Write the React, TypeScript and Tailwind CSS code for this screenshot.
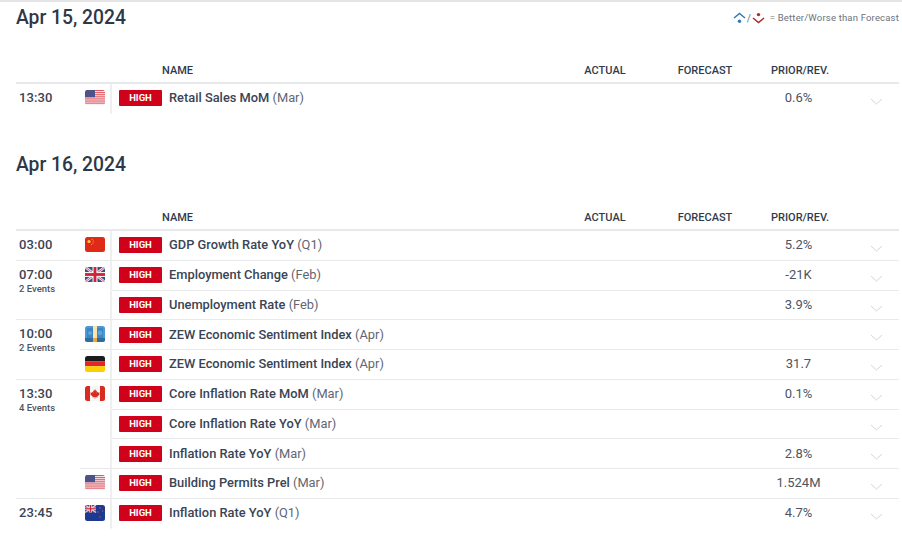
import React from "react";

type FlagName = "us" | "cn" | "gb" | "eu" | "de" | "ca" | "nz";

function Flag({ name }: { name: FlagName }) {
  const inner: Record<FlagName, React.ReactNode> = {
    us: (
      <>
        <rect width="20" height="15" fill="#f6eef0" />
        {[0, 2.1, 4.2, 6.3, 8.4, 10.5, 12.6].map((y) => (
          <rect key={y} y={y} width="20" height="1.05" fill="#e0525c" />
        ))}
        <rect width="10" height="7.2" fill="#4d5288" />
      </>
    ),
    cn: (
      <>
        <rect width="20" height="15" fill="#df2a17" />
        <circle cx="4" cy="4.5" r="1.6" fill="#f7d23a" />
        <circle cx="7.2" cy="2.2" r="0.5" fill="#f7d23a" />
        <circle cx="8.2" cy="4" r="0.5" fill="#f7d23a" />
        <circle cx="8" cy="6" r="0.5" fill="#f7d23a" />
        <circle cx="6.6" cy="7.4" r="0.5" fill="#f7d23a" />
      </>
    ),
    gb: (
      <>
        <rect width="20" height="15" fill="#3d4f8c" />
        <path d="M0 0L20 15M20 0L0 15" stroke="#f2f2f4" strokeWidth="2.6" />
        <path d="M0 0L20 15M20 0L0 15" stroke="#cf3044" strokeWidth="0.8" />
        <rect x="7.5" width="5" height="15" fill="#f2f2f4" />
        <rect y="5" width="20" height="5" fill="#f2f2f4" />
        <rect x="8.6" width="2.8" height="15" fill="#cf2337" />
        <rect y="6.1" width="20" height="2.8" fill="#cf2337" />
      </>
    ),
    eu: (
      <>
        <rect width="20" height="16" fill="#4b9ad8" />
        <rect x="2" y="2" width="6" height="10" fill="#3f86c0" />
        <rect x="12" y="2" width="6" height="10" fill="#3f86c0" />
        <circle cx="5" cy="7" r="2" fill="#5aa5de" />
        <circle cx="15" cy="7" r="2.4" fill="#5aa5de" />
        <rect y="12" width="20" height="4" fill="#2f6d9c" />
        <rect x="8" width="4" height="12" fill="#fbe3b0" />
        <rect x="8" y="12" width="4" height="4" fill="#f4a334" />
      </>
    ),
    de: (
      <>
        <rect width="20" height="5.2" fill="#1c1c1c" />
        <rect y="5.2" width="20" height="5" fill="#e3262e" />
        <rect y="10.2" width="20" height="5.8" fill="#fccf00" />
      </>
    ),
    ca: (
      <>
        <rect width="20" height="15" fill="#f6f6f6" />
        <rect width="5" height="15" fill="#d92b20" />
        <rect x="15" width="5" height="15" fill="#d92b20" />
        <path d="M10 3l1 1.9 1-.5-.4 2.4 1.3-1 .4 1 1.4-.2-.5 1.5.5.4-2.4 1.9.2 1-2.2-.3v1.7h-.6v-1.7l-2.2.3.2-1-2.4-1.9.5-.4-.5-1.5 1.4.2.4-1 1.3 1-.4-2.4 1 .5z" fill="#d92b20" />
      </>
    ),
    nz: (
      <>
        <rect width="20" height="16" fill="#1c3a8f" />
        <rect width="11" height="7.5" fill="#40508f" />
        <path d="M0 0L11 7.5M11 0L0 7.5" stroke="#eac6cc" strokeWidth="1.4" />
        <rect x="4.2" width="2.6" height="7.5" fill="#f0e4e8" />
        <rect y="2.5" width="11" height="2.6" fill="#f0e4e8" />
        <rect x="4.9" width="1.2" height="7.5" fill="#cf2337" />
        <rect y="3.2" width="11" height="1.2" fill="#cf2337" />
        <circle cx="15" cy="3" r="0.8" fill="#c9475f" />
        <circle cx="17.6" cy="6" r="0.8" fill="#c9475f" />
        <circle cx="13" cy="7" r="0.8" fill="#c9475f" />
        <circle cx="15" cy="12" r="0.8" fill="#c9475f" />
      </>
    ),
  };
  const h = name === "eu" || name === "de" || name === "nz" ? 16 : 15;
  return (
    <svg width="20" height={h} viewBox={`0 0 20 ${h}`} className="block">
      <defs>
        <clipPath id={`clip-${name}`}>
          <rect width="20" height={h} rx="2.5" />
        </clipPath>
      </defs>
      <g clipPath={`url(#clip-${name})`}>{inner[name]}</g>
    </svg>
  );
}

function Chevron() {
  return (
    <svg width="13" height="7" viewBox="0 0 13 7" fill="none" className="block">
      <path d="M1 1l5.5 5L12 1" stroke="#d4d6da" strokeWidth="1" />
    </svg>
  );
}

function Legend() {
  return (
    <div className="flex items-center text-[9.5px] text-[#6b7280] h-[16px]">
      <svg width="13" height="12" viewBox="0 0 13 12" fill="none" className="block">
        <path d="M1 6l5.5-4.5L12 6" stroke="#2f7ab8" strokeWidth="1.5" />
        <circle cx="6.5" cy="9.2" r="1.7" fill="#2f7ab8" />
      </svg>
      <span className="mx-[1px] text-[10px]">/</span>
      <svg width="13" height="12" viewBox="0 0 13 12" fill="none" className="block">
        <circle cx="6.5" cy="2.6" r="1.7" fill="#a92c2c" />
        <path d="M1 6l5.5 4.5L12 6" stroke="#a92c2c" strokeWidth="1.5" />
      </svg>
      <span className="ml-[5px] tracking-[0.18px]">= Better/Worse than Forecast</span>
    </div>
  );
}

function HeaderRow() {
  return (
    <div className="flex items-center h-[26px] pt-[3px] border-b-2 border-[#e8e9eb] text-[11px] font-medium text-[#2f3b4c]">
      <div className="w-[146px]" />
      <div className="flex-1">NAME</div>
      <div className="w-[100px] text-center">ACTUAL</div>
      <div className="w-[100px] text-center">FORECAST</div>
      <div className="w-[90px] text-center">PRIOR/REV.</div>
      <div className="w-[54px]" />
    </div>
  );
}

type Ev = { flag?: FlagName; name: string; period: string; prior?: string };
type Group = { time: string; count?: string; events: Ev[] };

function EventRow({ ev, line, flagLine }: { ev: Ev; line: boolean; flagLine: boolean }) {
  return (
    <div className="flex h-[29.75px]">
      <div
        className={`w-[32px] shrink-0 flex justify-center pt-[6px] border-r-2 border-r-[#eeeff1] border-b ${
          flagLine ? "border-b-[#e8e9eb]" : "border-b-transparent"
        }`}
      >
        {ev.flag ? <Flag name={ev.flag} /> : null}
      </div>
      <div className={`relative flex-1 flex items-center border-b ${line ? "border-b-[#e8e9eb]" : "border-b-transparent"}`}>
        <span className="ml-[7px] w-[43px] h-[16px] flex items-center justify-center rounded-[1px] bg-[#d0021b] text-white text-[9.5px] font-bold">
          HIGH
        </span>
        <span className="ml-[7px] -mt-[0.5px] flex-1 text-[12.85px] text-[#3a4454] font-medium">
          {ev.name} <span className="font-normal text-[#5f6672]">{ev.period}</span>
        </span>
        <span className="w-[90px] mr-[54px] -mt-[0.5px] text-center text-[13px] text-[#4b5563] pr-[3px]">{ev.prior}</span>
        <div className="absolute right-[16px] top-[14px]">
          <Chevron />
        </div>
      </div>
    </div>
  );
}

function GroupBlock({ g, last }: { g: Group; last: boolean }) {
  return (
    <div className="flex">
      <div className={`w-[64px] shrink-0 pl-[3px] pt-[6px] border-b ${last ? "border-b-transparent" : "border-b-[#e8e9eb]"}`}>
        <div className="text-[13px] leading-[16px] font-medium text-[#3a4454] tracking-[0.1px]">{g.time}</div>
        {g.count ? <div className="text-[9.5px] leading-[12px] font-medium text-[#4b5563]">{g.count}</div> : null}
      </div>
      <div className="flex-1">
        {g.events.map((ev, i) => {
          const lastInGroup = i === g.events.length - 1;
          const nextHasFlag = !lastInGroup && !!g.events[i + 1].flag;
          return (
            <EventRow
              key={i}
              ev={ev}
              line={!(last && lastInGroup)}
              flagLine={(lastInGroup && !last) || nextHasFlag}
            />
          );
        })}
      </div>
    </div>
  );
}

const day1: Group[] = [
  { time: "13:30", events: [{ flag: "us", name: "Retail Sales MoM", period: "(Mar)", prior: "0.6%" }] },
];

const day2: Group[] = [
  { time: "03:00", events: [{ flag: "cn", name: "GDP Growth Rate YoY", period: "(Q1)", prior: "5.2%" }] },
  {
    time: "07:00",
    count: "2 Events",
    events: [
      { flag: "gb", name: "Employment Change", period: "(Feb)", prior: "-21K" },
      { name: "Unemployment Rate", period: "(Feb)", prior: "3.9%" },
    ],
  },
  {
    time: "10:00",
    count: "2 Events",
    events: [
      { flag: "eu", name: "ZEW Economic Sentiment Index", period: "(Apr)" },
      { flag: "de", name: "ZEW Economic Sentiment Index", period: "(Apr)", prior: "31.7" },
    ],
  },
  {
    time: "13:30",
    count: "4 Events",
    events: [
      { flag: "ca", name: "Core Inflation Rate MoM", period: "(Mar)", prior: "0.1%" },
      { name: "Core Inflation Rate YoY", period: "(Mar)" },
      { name: "Inflation Rate YoY", period: "(Mar)", prior: "2.8%" },
      { flag: "us", name: "Building Permits Prel", period: "(Mar)", prior: "1.524M" },
    ],
  },
  { time: "23:45", events: [{ flag: "nz", name: "Inflation Rate YoY", period: "(Q1)", prior: "4.7%" }] },
];

function Section({ date, groups, legend }: { date: string; groups: Group[]; legend?: boolean }) {
  return (
    <section>
      <div className="flex justify-between h-[56px]">
        <h2 className="text-[19.3px] leading-[31px] font-medium text-[#2d3848]">{date}</h2>
        {legend ? (
          <div className="pt-[8px]">
            <Legend />
          </div>
        ) : null}
      </div>
      <HeaderRow />
      {groups.map((g, i) => (
        <GroupBlock key={i} g={g} last={i === groups.length - 1} />
      ))}
    </section>
  );
}

export default function App() {
  return (
    <div className="w-[902px] h-[548px] bg-white overflow-hidden border-t-2 border-[#e5e5e5] font-['Roboto',sans-serif]">
      <div className="ml-[16px] mr-[3px] flex flex-col gap-[35.25px]">
        <Section date="Apr 15, 2024" groups={day1} legend />
        <Section date="Apr 16, 2024" groups={day2} />
      </div>
    </div>
  );
}
